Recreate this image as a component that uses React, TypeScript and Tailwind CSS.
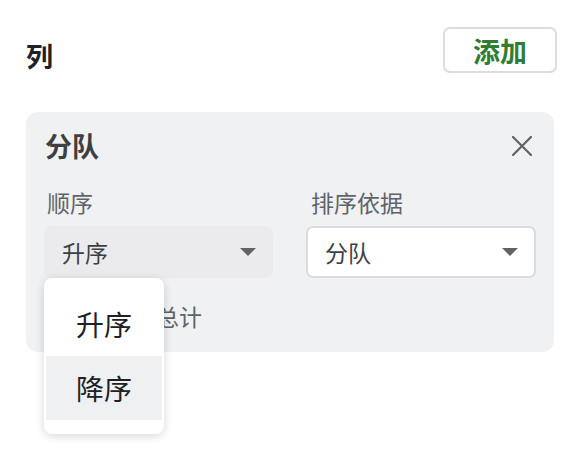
import React from "react";

const Caret = () => (
  <svg width="16" height="8" viewBox="0 0 16 8" className="shrink-0">
    <path d="M0 0 L16 0 L8 8 Z" fill="#5f6368" />
  </svg>
);

export default function App() {
  return (
    <div className="w-[582px] h-[466px] bg-white font-['Noto_Sans_CJK_SC','Noto_Sans',sans-serif] overflow-hidden">
      <div className="pl-[26px] pr-[25px] pt-[27px]">
        <div className="flex items-center justify-between h-[46px]">
          <div className="text-[27px] leading-none font-bold text-[#202124] pt-[10px]">列</div>
          <button className="w-[114px] h-[46px] rounded-[7px] border-2 border-[#dadce0] bg-white flex items-center justify-center text-[27px] leading-none font-bold text-[#2e7d32]">
            添加
          </button>
        </div>
        <div className="mt-[39px] h-[240px] w-[528px] rounded-[12px] bg-[#f0f1f3] px-[18px] pt-[20px]">
          <div className="flex items-center justify-between">
            <div className="text-[27px] leading-none font-bold text-[#3c4043] pl-[1px]">分队</div>
            <svg width="20" height="20" viewBox="0 0 20 20" className="mr-[4px]">
              <path d="M1 1 L19 19 M19 1 L1 19" stroke="#5f6368" strokeWidth="2.2" strokeLinecap="square" />
            </svg>
          </div>
          <div className="grid grid-cols-[229px_230px] gap-x-[33px] mt-[32px]">
            <div className="text-[23px] leading-none text-[#5f6368] pl-[3px]">顺序</div>
            <div className="text-[23px] leading-none text-[#5f6368] pl-[5px]">排序依据</div>
            <div className="relative mt-[12px]">
              <div className="h-[52px] rounded-[7px] bg-[#ebebed] flex items-center justify-between pl-[18px] pr-[17px]">
                <span className="text-[23px] leading-none text-[#3c4043]">升序</span>
                <Caret />
              </div>
              <div className="absolute left-0 top-[52px] w-[120px] h-[156px] rounded-[8px] bg-white shadow-[0_2px_10px_rgba(0,0,0,0.16)] py-[14px] px-[2px] z-10">
                <div className="h-[64px] flex items-center justify-center text-[28px] leading-none text-[#202124]">升序</div>
                <div className="h-[64px] flex items-center justify-center bg-[#eef0f2] text-[28px] leading-none text-[#202124]">降序</div>
              </div>
            </div>
            <div className="mt-[12px] h-[52px] rounded-[7px] bg-white border-2 border-[#dadce0] flex items-center justify-between pl-[17px] pr-[16px]">
              <span className="text-[23px] leading-none text-[#3c4043]">分队</span>
              <Caret />
            </div>
          </div>
          <div className="flex items-center mt-[27px] pl-[2px]">
            <div className="w-[22px] h-[22px] rounded-[4px] border-2 border-[#5f6368]"></div>
            <span className="ml-[42px] text-[23px] leading-none text-[#5f6368]">显示总计</span>
          </div>
        </div>
      </div>
    </div>
  );
}
